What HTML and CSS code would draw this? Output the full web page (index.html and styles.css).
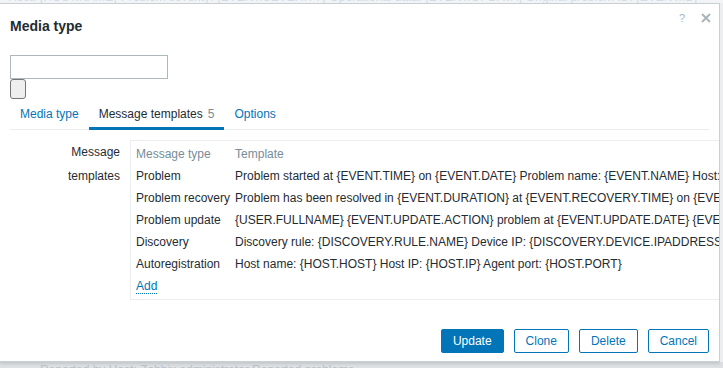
FILE: index.html
```html
<!DOCTYPE html>
<html lang="en">
<head>
    <meta charset="UTF-8">
    <meta name="viewport" content="width=device-width, initial-scale=1.0">
    <title>Media type</title>
    <link rel="stylesheet" href="styles.css">
</head>
<body>
    <div class="page-top">
        <div class="page-line">Host: {HOST.NAME} Problem severity: {EVENT.SEVERITY} Operational data: {EVENT.OPDATA} Original problem ID: {EVENT.ID}</div>
    </div>

    <div class="main">
        <div class="dialog">
            <div class="dialog-header">
                <h4>Media type</h4>
                <div class="header-icons">
                    <span class="btn-help">?</span>
                    <svg class="btn-close" width="10" height="10" viewBox="0 0 10 10">
                        <path d="M1 1 L9 9 M9 1 L1 9" stroke="#aab5bb" stroke-width="2" fill="none"/>
                    </svg>
                </div>
            </div>

            <div class="dialog-body">
                <input type="text" class="name-input">
                <button class="blank-btn"></button>

                <ul class="tabs">
                    <li><a href="#">Media type</a></li>
                    <li class="active"><a href="#">Message templates<span class="count">5</span></a></li>
                    <li><a href="#">Options</a></li>
                </ul>

                <div class="form-row">
                    <label class="form-label">Message templates</label>
                    <div class="form-field">
                        <div class="templates-box">
                            <table class="templates">
                                <thead>
                                    <tr>
                                        <th>Message type</th>
                                        <th>Template</th>
                                    </tr>
                                </thead>
                                <tbody>
                                    <tr>
                                        <td>Problem</td>
                                        <td>Problem started at {EVENT.TIME} on {EVENT.DATE} Problem name: {EVENT.NAME} Host: {HOST.NAME} Severity: {EVENT.SEVERITY}</td>
                                    </tr>
                                    <tr>
                                        <td>Problem recovery</td>
                                        <td>Problem has been resolved in {EVENT.DURATION} at {EVENT.RECOVERY.TIME} on {EVENT.RECOVERY.DATE}</td>
                                    </tr>
                                    <tr>
                                        <td>Problem update</td>
                                        <td>{USER.FULLNAME} {EVENT.UPDATE.ACTION} problem at {EVENT.UPDATE.DATE} {EVENT.UPDATE.TIME}</td>
                                    </tr>
                                    <tr>
                                        <td>Discovery</td>
                                        <td>Discovery rule: {DISCOVERY.RULE.NAME} Device IP: {DISCOVERY.DEVICE.IPADDRESS}</td>
                                    </tr>
                                    <tr>
                                        <td>Autoregistration</td>
                                        <td>Host name: {HOST.HOST} Host IP: {HOST.IP} Agent port: {HOST.PORT}</td>
                                    </tr>
                                    <tr>
                                        <td><a href="#" class="link-add">Add</a></td>
                                        <td></td>
                                    </tr>
                                </tbody>
                            </table>
                        </div>
                    </div>
                </div>
            </div>

            <div class="dialog-footer">
                <button class="btn btn-main">Update</button>
                <button class="btn">Clone</button>
                <button class="btn">Delete</button>
                <button class="btn">Cancel</button>
            </div>
        </div>
        <div class="page-side"></div>
    </div>

    <div class="page-bottom">
        <div class="page-line">Reported by Host: Zabbix administrator Reported problems</div>
    </div>
</body>
</html>
```

FILE: styles.css
```css
body {
    margin: 0;
    height: 368px;
    overflow: hidden;
    background-color: #e6e9eb;
    font-family: "Liberation Sans", Arial, sans-serif;
    font-size: 12px;
    color: #1f2c33;
}
.page-top {
    height: 3px;
    overflow: hidden;
    background-color: #f2f4f5;
}
.page-line {
    line-height: 14px;
    margin-top: -10px;
    padding-left: 8px;
    color: #d0dcea;
    white-space: nowrap;
}
.main {
    display: flex;
}
.page-side {
    flex: 1;
    background-color: #eceef0;
}
.dialog {
    width: 720px;
    height: 359px;
    box-sizing: border-box;
    border: 1px solid #c9d0d4;
    border-left: 0;
    background-color: #fff;
    box-shadow: 0 2px 3px rgba(0,0,0,0.12);
    overflow: hidden;
    display: flex;
    flex-direction: column;
}
.dialog-header {
    display: flex;
    justify-content: space-between;
    padding: 8px 8px 0 10px;
}
.dialog-header h4 {
    margin: 6px 0 0;
    font-size: 14px;
    line-height: 16px;
    font-weight: bold;
    color: #1f2c33;
}
.header-icons {
    display: flex;
    align-items: center;
    gap: 16px;
    height: 10px;
    margin-top: 1px;
}
.btn-help {
    font-size: 11px;
    line-height: 10px;
    color: #aab5bb;
}
.dialog-body {
    padding: 21px 10px 0 10px;
}
.name-input {
    display: block;
    width: 158px;
    height: 24px;
    box-sizing: border-box;
    margin: 0;
    border: 1px solid #acb8be;
    padding: 0 5px;
    font-family: inherit;
    font-size: 12px;
}
.blank-btn {
    display: block;
    width: 16px;
    height: 20px;
    margin: 0;
    padding: 0;
    border: 1px solid #767676;
    border-radius: 3px;
    background-color: #efefef;
}
.tabs {
    display: flex;
    list-style: none;
    margin: 0;
    padding: 0;
    border-bottom: 1px solid #ebeef0;
    height: 30px;
}
.tabs li {
    height: 31px;
    box-sizing: border-box;
    border-bottom: 3px solid transparent;
}
.tabs li a {
    display: block;
    padding: 8px 10px 6px;
    line-height: 14px;
    color: #0275b8;
    text-decoration: none;
}
.tabs li.active {
    border-bottom-color: #0275b8;
}
.tabs li.active a {
    color: #1f2c33;
}
.count {
    margin-left: 5px;
    color: #768d99;
}
.form-row {
    display: grid;
    grid-template-columns: 120px 1fr;
    padding-top: 10px;
}
.form-label {
    padding: 0 10px 0 30px;
    text-align: right;
    line-height: 24px;
}
.templates-box {
    display: inline-block;
    border: 1px solid #ebeef0;
    padding: 2px 0 2px 5px;
}
.templates {
    border-collapse: collapse;
    white-space: nowrap;
}
.templates th,
.templates td {
    padding: 4px 5px 4px 0;
    line-height: 14px;
    text-align: left;
}
.templates th {
    font-weight: normal;
    color: #768d99;
}
.link-add {
    color: #0275b8;
    text-decoration: none;
    border-bottom: 1px dotted #0275b8;
}
.dialog-footer {
    margin-top: auto;
    display: flex;
    justify-content: flex-end;
    gap: 10px;
    padding: 0 10px 8px 10px;
}
.btn {
    height: 24px;
    padding: 0 11px;
    border: 1px solid #0275b8;
    border-radius: 2px;
    background-color: #fff;
    color: #0275b8;
    font-family: inherit;
    font-size: 12px;
    cursor: pointer;
}
.btn-main {
    background-color: #0275b8;
    color: #fff;
}
.page-bottom {
    height: 6px;
    overflow: hidden;
    background-color: #dde1e3;
}
.page-bottom .page-line {
    margin-top: 1px;
    padding-left: 40px;
    color: #b8bfc3;
}
```
